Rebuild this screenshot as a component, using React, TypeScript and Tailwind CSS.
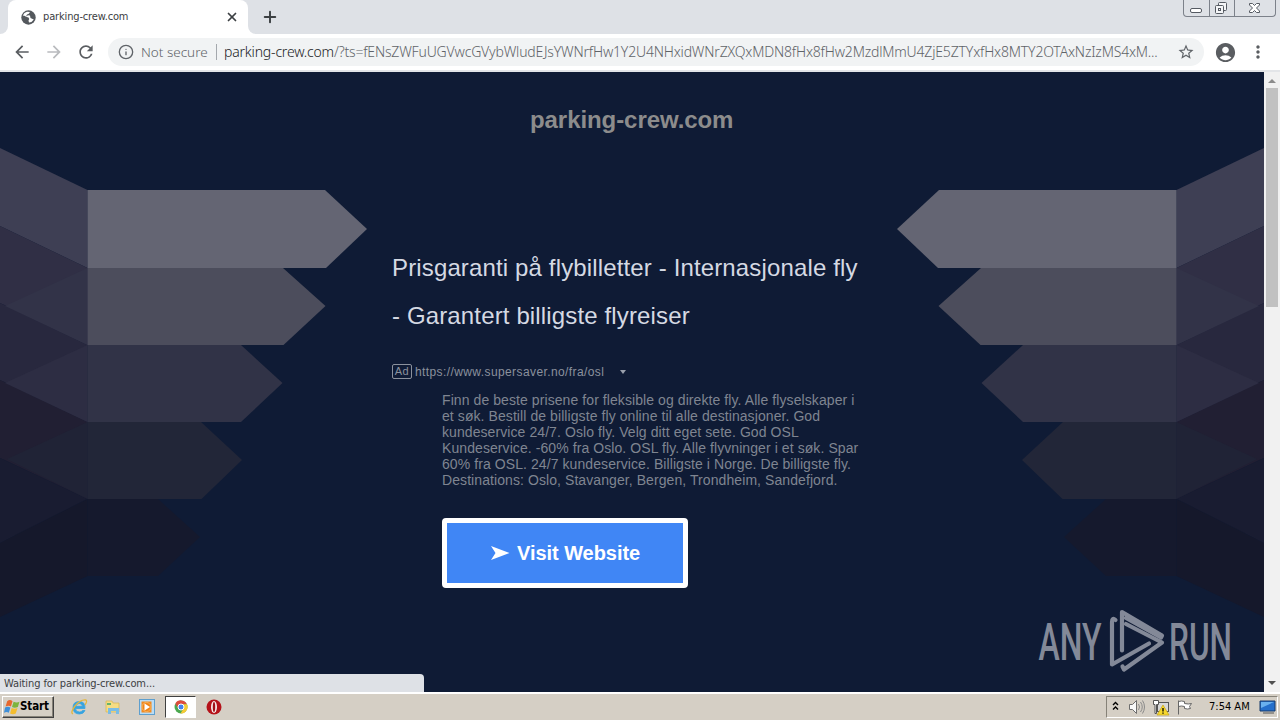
import { ReactNode } from "react";
import { Info, Plus, X } from "lucide-react";
import {
    MdAccountCircle,
    MdArrowBack,
    MdArrowForward,
    MdMoreVert,
    MdRefresh,
    MdStarBorder,
} from "react-icons/md";

const query =
    "/?ts=fENsZWFuUGVwcGVybWludEJsYWNrfHw1Y2U4NHxidWNrZXQxMDN8fHx8fHw2MzdlMmU4ZjE5ZTYxfHx8MTY2OTAxNzIzMS4xM...";

const description = [
    "Finn de beste prisene for fleksible og direkte fly. Alle flyselskaper i",
    "et søk. Bestill de billigste fly online til alle destinasjoner. God",
    "kundeservice 24/7. Oslo fly. Velg ditt eget sete. God OSL",
    "Kundeservice. -60% fra Oslo. OSL fly. Alle flyvninger i et søk. Spar",
    "60% fra OSL. 24/7 kundeservice. Billigste i Norge. De billigste fly.",
    "Destinations: Oslo, Stavanger, Bergen, Trondheim, Sandefjord.",
];

function WindowButtons() {
    return (
        <div className="ml-auto mr-[4px] flex h-[17px] w-[93px] rounded-b-[4px] border border-t-0 border-[#7c818a]">
            <div className="w-[26px] border-r border-[#7c818a]">
                <svg width="25" height="16" fill="white" stroke="#555a62">
                    <rect x="6.5" y="8.5" width="11" height="4" rx="1.5" />
                </svg>
            </div>
            <div className="w-[25px] border-r border-[#7c818a]">
                <svg width="24" height="16" fill="#f4f5f7" stroke="#555a62">
                    <rect x="8.5" y="2.5" width="8" height="8" rx="1" />
                    <rect x="5.5" y="5.5" width="8" height="8" rx="1" />
                    <rect x="8.5" y="8.5" width="2" height="2" />
                </svg>
            </div>
            <div className="flex-1">
                <svg width="40" height="16">
                    <path
                        d="M14.5 3.500h3l2 2 2-2h3v1.500l-3 3 3 3v1.500h-3l-2-2-2 2h-3v-1.500l3-3-3-3z"
                        fill="white"
                        stroke="#555a62"
                    />
                </svg>
            </div>
        </div>
    );
}

function TabStrip() {
    return (
        <div className="flex h-[34px] bg-[#dee1e6]">
            <div className="flex h-full w-2 bg-white">
                <div className="h-full w-full rounded-br-[8px] bg-[#dee1e6]" />
            </div>
            <div className="flex h-full w-[240px] items-center rounded-t-[8px] bg-white pl-[13px] pr-[9px]">
                <svg width="15" height="15" viewBox="0 0 15 15">
                    <circle cx="7.500" cy="7.500" r="7.200" fill="#54585d" />
                    <path d="M1.800 5.500Q3 2.500 6 1.800L9 2Q8 4 6 4.500Q5.500 6.500 4 6.500L7.500 7.500Q9 9 7.500 10.500L8 12.500Q11 12.500 12.800 9.500L9.500 8L9 5.500L7 5.200L5.500 6.200z" fill="white" />
                </svg>
                <span className="ml-[7px] font-['DejaVu_Sans_Condensed','DejaVu_Sans',sans-serif] text-[11px] tracking-[-0.15px] text-[#3c4043]">
                    parking-crew.com
                </span>
                <X className="ml-auto size-[14px] text-[#3c4043]" strokeWidth={3} />
            </div>
            <div className="flex h-full w-2 bg-white">
                <div className="h-full w-full rounded-bl-[8px] bg-[#dee1e6]" />
            </div>
            <Plus className="ml-[5px] mt-[8px] size-[18px] text-[#3c4043]" strokeWidth={2.6} />
            <WindowButtons />
        </div>
    );
}

function Toolbar() {
    return (
        <div className="flex h-[38px] items-center border-b-2 border-[#e3e5e8] bg-white pl-[12px]">
            <MdArrowBack className="size-5 text-[#5a5d61]" />
            <MdArrowForward className="ml-3 size-5 text-[#b9bbbe]" />
            <MdRefresh className="ml-3 size-5 text-[#5a5d61]" />
            <div className="ml-[12px] flex h-7 w-[1096px] items-center whitespace-nowrap rounded-full bg-[#f1f3f4] pl-[10px] font-['Noto_Sans',sans-serif] text-[14px] font-light">
                <Info className="size-4 shrink-0 text-[#5f6368]" />
                <span className="ml-[7px] w-[68px] text-[13.5px] text-[#5f6368]">Not secure</span>
                <span className="ml-[7px] h-4 w-px bg-[#a4a8ad]" />
                <span className="mb-[2px] ml-[7px] w-[110px] tracking-[-0.18px] text-[#202124]">
                    parking-crew.com
                </span>
                <span className="mb-[2px] w-[826px] tracking-[-0.18px] text-[#5f6368]">{query}</span>
                <MdStarBorder className="ml-[17px] size-[18px] shrink-0 text-[#5f6368]" />
            </div>
            <MdAccountCircle className="ml-[10px] size-[23px] text-[#5a5d61]" />
            <MdMoreVert className="ml-[11px] size-5 text-[#5a5d61]" />
        </div>
    );
}

function Arrows() {
    return (
        <g>
            <path d="M0 148L87.500 190V268L0 226z" fill="#3e3f54" />
            <path d="M0 226L87.500 268V345L0 303z" fill="#302f45" />
            <path d="M0 303L87.500 345V422L0 380z" fill="#28283e" />
            <path d="M0 380L87.500 422V499L0 458z" fill="#211f33" />
            <path d="M0 458L87.500 499L0 543z" fill="#191c31" />
            <path d="M0 543L87.500 499V576L0 617z" fill="#15182b" />
            <path d="M87.500 268L5 306L87.500 345z" fill="#323348" />
            <path d="M87.500 345L5 383L87.500 422z" fill="#2d2d43" />
            <path d="M87.500 422L7 459L87.500 499z" fill="#202336" />
            <path d="M87.500 190H325L367 229L326 268H87.500z" fill="#646573" />
            <path d="M87.500 268H283L325.500 306L283.500 345H87.500z" fill="#4c4d5c" />
            <path d="M87.500 345H241L282.500 383L241 422H87.500z" fill="#313347" />
            <path d="M87.500 422H201L242 460L201.500 499H87.500z" fill="#222638" />
            <path d="M87.500 499H158L200 537L158 576H87.500z" fill="#15192d" />
        </g>
    );
}

function Watermark() {
    return (
        <svg className="absolute bottom-[16px] right-0 overflow-visible" width="232" height="70" viewBox="1032 606 232 70">
            <g fill="#838998" fontFamily="Roboto, sans-serif" fontSize="51.5" fontWeight="500">
                <text x="1038.500" y="659.5" textLength="63" lengthAdjust="spacingAndGlyphs">ANY</text>
                <text x="1169" y="659.5" textLength="63" lengthAdjust="spacingAndGlyphs">RUN</text>
            </g>
            <g fill="none" stroke="#838998" strokeWidth="4.200" strokeLinejoin="round" strokeLinecap="round">
                <path d="M1115.500 620q-3.500-3-3.500 2V664.500L1149 643.500" />
                <path d="M1122 650.500V612L1162 635.500L1161 637.500L1126 618" />
                <path d="M1126 624L1162 642.500L1124 669.500L1122.500 666.500" />
            </g>
        </svg>
    );
}

function ParkedPage() {
    return (
        <div className="relative w-[1264px] bg-[#0f1b35] font-['Liberation_Sans',Arial,sans-serif]">
            <svg className="absolute inset-0" width="1264" height="620" viewBox="0 72 1264 620">
                <Arrows />
                <g transform="translate(1264 0) scale(-1 1)">
                    <Arrows />
                </g>
            </svg>
            <div className="relative flex flex-col items-start pl-[392px]">
                <h1 className="ml-[138px] mt-[34px] text-[24px] font-bold leading-[28px] tracking-[-0.07px] text-[#8c8c8c]">
                    parking-crew.com
                </h1>
                <h2 className="mt-[110px] whitespace-nowrap text-[24px] leading-[48px] tracking-[0.14px] text-[#d5d9e3]">
                    Prisgaranti på flybilletter - Internasjonale fly
                    <br />- Garantert billigste flyreiser
                </h2>
                <div className="mt-[23px] flex h-4 items-center text-[12px] tracking-[0.4px] text-[#8b919d]">
                    <span className="flex h-[15px] w-[20px] items-center justify-center rounded-[2px] border border-[#8b919d] text-[11px]">
                        Ad
                    </span>
                    <span className="ml-[3px] mt-px w-[205px]">https://www.supersaver.no/fra/osl</span>
                    <span className="mt-[2px] size-0 border-x-[3px] border-t-[4px] border-x-transparent border-t-[#9aa0ac]" />
                </div>
                <p className="ml-[50px] mt-[13px] whitespace-nowrap text-[14px] leading-4 tracking-[0.08px] text-[#7f8591]">
                    {description.map((line) => (
                        <span key={line} className="block">
                            {line}
                        </span>
                    ))}
                </p>
                <button className="ml-[50px] mt-[30px] flex h-[70px] w-[246px] items-center rounded-[4px] border-[5px] border-white bg-[#4086f5] pl-[44px] text-[20px] font-bold tracking-[-0.05px] text-white">
                    <svg className="mr-[7px]" width="19" height="16" fill="white">
                        <path d="M0 1L18.500 8L0 15L4.500 8z" />
                    </svg>
                    Visit Website
                </button>
            </div>
            <Watermark />
            <div className="absolute bottom-0 left-0 h-[18px] w-[424px] rounded-tr-[4px] bg-[#dee1e6] pl-[4px] font-['DejaVu_Sans_Condensed','DejaVu_Sans',sans-serif] text-[11px] leading-[19px] tracking-[-0.1px] text-[#3c4043]">
                Waiting for parking-crew.com...
            </div>
        </div>
    );
}

function Scrollbar() {
    return (
        <div className="flex w-4 flex-col items-center bg-[#f1f1f1]">
            <svg width="16" height="16">
                <path d="M8 7L12 11H4z" fill="#8c8c8c" />
            </svg>
            <div className="h-[219px] w-[12px] bg-[#c1c1c1]" />
            <svg className="mt-auto" width="16" height="16">
                <path d="M4 5H12L8 9z" fill="#505050" />
            </svg>
        </div>
    );
}

function TaskIcon({ children }: { children: ReactNode }) {
    return (
        <svg width="18" height="18" viewBox="0 0 18 18">
            {children}
        </svg>
    );
}

function Taskbar() {
    return (
        <div className="flex h-7 items-center border-t-2 border-white bg-[#d5cfc5] pl-[2px] font-['DejaVu_Sans_Condensed','DejaVu_Sans',sans-serif] text-[11px] text-black">
            <div className="flex h-[22px] w-[52px] items-center border border-b-[#404040] border-l-white border-r-[#404040] border-t-white pl-px text-[11.5px] font-bold tracking-[-0.1px] shadow-[inset_-1px_-1px_0_#868278]">
                <svg width="16" height="16" viewBox="0 0 15 15">
                    <path d="M3 2Q5.500 0 8 2L6.500 7Q4.500 5.500 1.500 7z" fill="#e8672c" />
                    <path d="M9 2.500Q12 4 14.500 2.500L13 7.500Q10 9 7.500 7.500z" fill="#7db43c" />
                    <path d="M1 8Q3.500 6.500 6 8L4.500 13Q2.500 11.500 0 13z" fill="#3f8fd8" />
                    <path d="M7.200 8.500Q10 10 12.700 8.500L11 13.500Q8.500 15 5.700 13.500z" fill="#f4bd2e" />
                </svg>
                <span>Start</span>
            </div>
            <div className="ml-[16px] flex items-center">
                <TaskIcon>
                    <path d="M15 10.500H5.500Q5.500 14 9.500 14Q11.500 14 12.500 12.500H15Q13.500 16 9.500 16Q3 16 3 9.500Q3 3.500 9.300 3.500Q15.500 3.500 15 10.500zM5.800 8.300H12.500Q12 5.500 9.200 5.500Q6.500 5.500 5.800 8.300z" fill="#36a3e0" stroke="#36a3e0" strokeWidth=".8" fillRule="evenodd" />
                    <path d="M3 16Q0 15 5 8Q11 1 16 2Q17.500 3 15 7" fill="none" stroke="#e4b63c" strokeWidth="1.300" />
                </TaskIcon>
                <span className="w-[16px]" />
                <TaskIcon>
                    <path d="M2 3h6l1 2h6v9H2z" fill="#f5dc83" stroke="#d7b451" strokeWidth=".7" />
                    <path d="M3 5h4v2H3z" fill="#65b36c" />
                    <path d="M4 16v-6h11v6h-3v-3H7v3z" fill="#79bce5" />
                </TaskIcon>
                <span className="w-[16px]" />
                <TaskIcon>
                    <rect x="1.5" y="1.5" width="15" height="15" fill="#b9dcf5" stroke="#5e9fce" />
                    <rect x="3.5" y="3.5" width="10" height="11" fill="#f28a20" />
                    <circle cx="8.500" cy="9" r="4.500" fill="#f08418" stroke="#f9b35c" />
                    <path d="M6.500 5.500L12 9L6.500 12.500z" fill="white" />
                </TaskIcon>
            </div>
            <div className="ml-[9px] flex h-[22px] w-[31px] items-center justify-center border border-b-white border-l-[#404040] border-r-white border-t-[#404040] bg-white">
                <svg width="14" height="14" viewBox="0 0 14 14">
                    <circle cx="7" cy="7" r="6.500" fill="#4aa84f" />
                    <path d="M1.300 3.700A6.500 6.500 0 0 1 12.900 4.200H7z" fill="#df4b3c" />
                    <path d="M13 4.200A6.500 6.500 0 0 1 6.500 13.500L9.500 8.500L7 4.200z" fill="#f6ca35" />
                    <path d="M1.300 3.700L4.500 8.500L7 4.200z" fill="#df4b3c" />
                    <circle cx="7" cy="7" r="3" fill="#4382ed" stroke="white" />
                </svg>
            </div>
            <svg className="ml-[10px]" width="16" height="16" viewBox="0 0 16 16">
                <circle cx="8" cy="8" r="7.500" fill="#b51219" />
                <ellipse cx="8" cy="8" rx="3" ry="6" fill="#f7eaea" />
                <ellipse cx="8" cy="8" rx="1.200" ry="5" fill="#a01016" />
            </svg>
            <div className="ml-auto mr-[2px] flex h-[22px] w-[172px] items-center border border-b-white border-l-[#868278] border-r-white border-t-[#868278] pl-[5px]">
                <svg width="8" height="12" fill="none" stroke="black" strokeWidth="1.400">
                    <path d="M1 4L3.500 1.500L6 4M1 8.500L3.500 6L6 8.500" />
                </svg>
                <svg className="ml-[8px]" width="18" height="18" fill="#f8f8f8" stroke="#6d6d6d">
                    <path d="M1.500 6.500h3l4-4v13l-4-4h-3z" />
                    <path d="M10.500 6q2 3 0 6M12.500 4q3.500 5 0 10M14.500 2.500q4 6.500 0 13" fill="none" stroke="#8a8a8a" />
                </svg>
                <svg className="ml-[6px]" width="18" height="18">
                    <rect x="5.5" y="4.5" width="11" height="9" fill="#d8d8d8" stroke="#555" />
                    <path d="M1.500 2.500h5v4h-2v9h-1.500v-9h-1.500z" fill="white" stroke="#555" />
                    <path d="M11 7L17 17H5z" fill="#f6d82d" stroke="#c5a414" strokeWidth=".7" />
                    <path d="M11 10v3.500M11 14.500v1.200" stroke="black" strokeWidth="1.300" />
                </svg>
                <svg className="ml-[6px]" width="18" height="18" fill="white" stroke="#666">
                    <path d="M2.500 2.500v14M2.500 3.500q3-1 6 0v2q4 1 7 0l-2 3 1 2q-3 1-6 0v-2q-3-1-6 0" />
                </svg>
                <span className="ml-[15px] w-[50px] whitespace-nowrap">7:54 AM</span>
                <svg width="18" height="16">
                    <path d="M1 2h15v10H1z" fill="#246fcb" stroke="#173a6b" />
                    <path d="M2 3h13L2 9z" fill="#69b1ef" />
                    <path d="M4 14h11" stroke="#555" />
                </svg>
            </div>
        </div>
    );
}

export default function App() {
    return (
        <div className="flex h-[720px] w-[1280px] flex-col overflow-hidden">
            <TabStrip />
            <Toolbar />
            <main className="flex h-[620px]">
                <ParkedPage />
                <Scrollbar />
            </main>
            <Taskbar />
        </div>
    );
}
